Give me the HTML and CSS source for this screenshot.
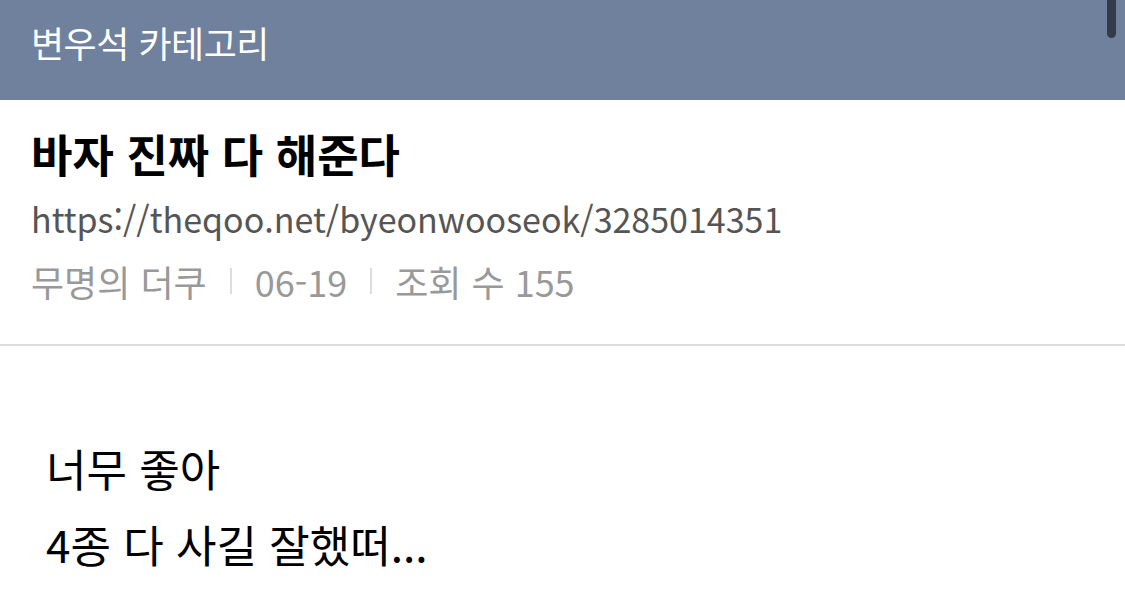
FILE: index.html
```html
<!DOCTYPE html>
<html lang="ko">
<head>
<meta charset="utf-8">
<link rel="stylesheet" href="styles.css">
</head>
<body>
<header class="topbar">
  <div class="topbar-title">변우석 카테고리</div>
  <div class="scrollbar"></div>
</header>
<section class="post-head">
  <h1 class="post-title">바자 진짜 다 해준다</h1>
  <div class="post-url">https://theqoo.net/byeonwooseok/3285014351</div>
  <div class="post-meta">
    <span>무명의 더쿠</span>
    <span class="sep"></span>
    <span>06-19</span>
    <span class="sep"></span>
    <span>조회 수 155</span>
  </div>
</section>
<article class="post-body">
  <p>너무 좋아</p>
  <p>4종 다 사길 잘했떠...</p>
</article>
</body>
</html>
```
FILE: styles.css
```css
* { box-sizing: border-box; }
html, body { margin: 0; padding: 0; background: #fff; }
body {
  font-family: "Noto Sans CJK KR", "Noto Sans", sans-serif;
  width: 1125px;
  height: 610px;
  overflow: hidden;
}
.topbar {
  position: relative;
  height: 100px;
  background: #6f819c;
  display: flex;
  align-items: center;
  padding: 0 0 16px 31px;
}
.topbar-title {
  color: #fff;
  font-size: 36px;
  letter-spacing: -0.5px;
}
.scrollbar {
  position: absolute;
  right: 9px;
  top: 0;
  width: 9px;
  height: 38px;
  border-radius: 0 0 5px 5px;
  background: #343c4b;
}
.post-head {
  padding: 24px 0 0 31px;
  height: 246px;
  border-bottom: 2px solid #dcdcdc;
}
.post-title {
  margin: 0;
  font-size: 45px;
  font-weight: 700;
  color: #000;
  line-height: 60px;
}
.post-url {
  margin-top: 3px;
  font-size: 34px;
  color: #555;
  line-height: 64px;
}
.post-meta {
  display: flex;
  align-items: center;
  font-size: 36px;
  color: #999;
  line-height: 60px;
}
.sep {
  width: 2px;
  height: 26px;
  background: #ddd;
  margin: 0 23px;
}
.post-body {
  padding: 84px 0 0 46px;
}
.post-body p {
  margin: 0;
  font-size: 44px;
  line-height: 76px;
  color: #000;
}
```
